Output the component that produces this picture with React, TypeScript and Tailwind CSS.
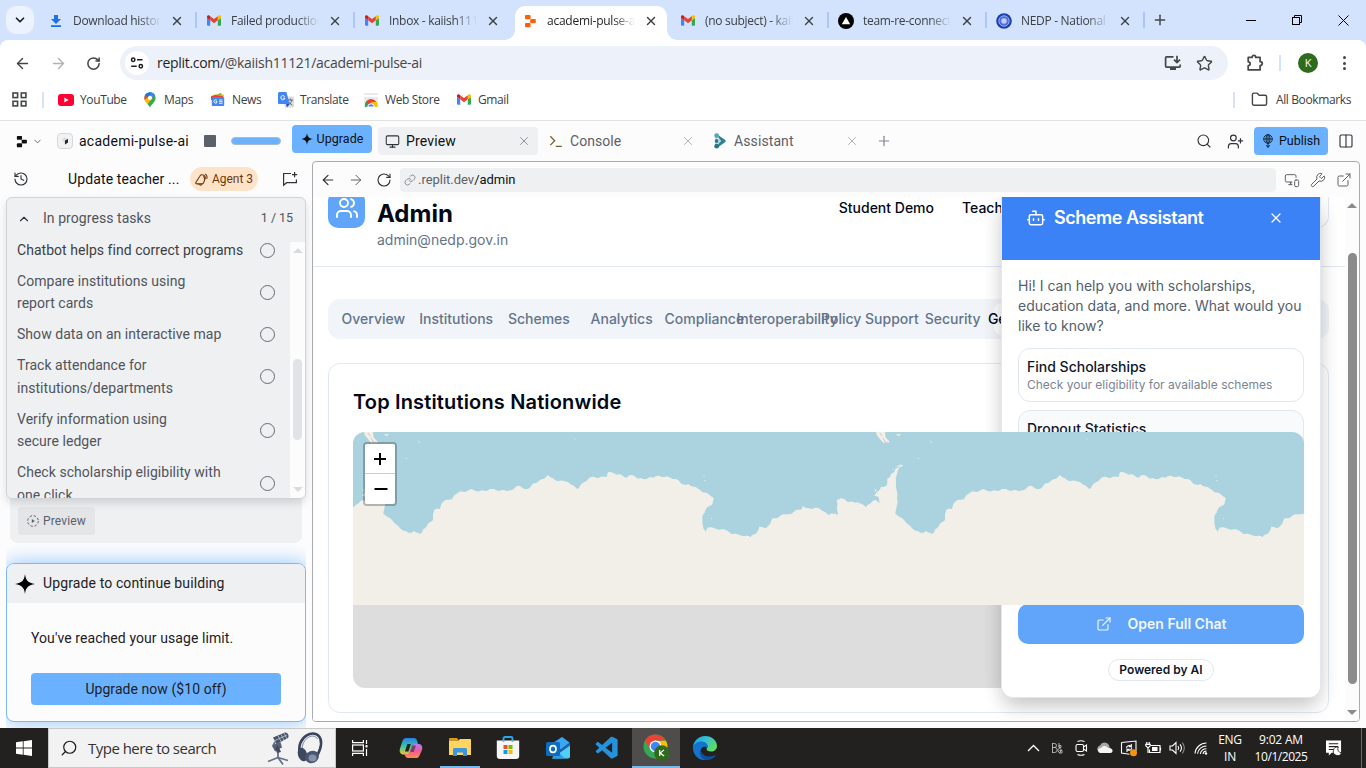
import type { ReactNode } from "react";
import {
  ArrowLeft,
  ArrowRight,
  Bot,
  ChevronDown,
  ChevronUp,
  Columns2,
  ExternalLink,
  Folder,
  History,
  Link,
  Monitor,
  MonitorSmartphone,
  Plus,
  RotateCw,
  Search,
  Star,
  UserPlus,
  Users,
  Wrench,
  X,
} from "lucide-react";
import { VscVscode } from "react-icons/vsc";

/* ---------- small drawings ---------- */

function GmailIcon() {
  return (
    <svg viewBox="0 0 24 18" className="h-[11px] w-[14px] shrink-0">
      <path fill="#4285f4" d="M1.6 18H5.5V8.6L0 4.5v11.9C0 17.3.7 18 1.6 18z" />
      <path fill="#34a853" d="M18.5 18h3.9c.9 0 1.6-.7 1.6-1.6V4.5l-5.5 4.1z" />
      <path fill="#fbbc04" d="M18.5 1.6v7L24 4.5V2.3C24 .3 21.7-.9 20 .3z" />
      <path fill="#ea4335" d="M5.5 8.6v-7L12 6.5l6.5-4.9v7L12 13.5z" />
      <path fill="#c5221f" d="M0 2.3v2.2l5.5 4.1v-7L4 .3C2.3-.9 0 .3 0 2.3z" />
    </svg>
  );
}

function ReplitIcon({ className }: { className: string }) {
  return (
    <svg viewBox="0 0 12 14" className={className} fill="currentColor">
      <rect x="1" y="1" width="5.6" height="4.2" rx="0.9" />
      <rect x="6.2" y="5" width="5.6" height="4.2" rx="0.9" />
      <rect x="1" y="9" width="5.6" height="4.2" rx="0.9" />
    </svg>
  );
}

function DownloadIcon() {
  return (
    <svg viewBox="0 0 12 14" className="h-3.5 w-3" fill="#1a73e8">
      <path d="M4 1h4v4h3L6 10 1 5h3z" />
      <rect x="1" y="11.2" width="10" height="1.8" />
    </svg>
  );
}

function VercelIcon() {
  return (
    <svg viewBox="0 0 16 16" className="size-4">
      <circle cx="8" cy="8" r="8" />
      <path d="M8 4l4.200 7.200H3.800z" fill="#fff" />
    </svg>
  );
}

function EmblemIcon() {
  return (
    <svg viewBox="0 0 16 16" className="size-4">
      <circle cx="8" cy="8" r="7.8" fill="#1e40af" />
      <circle cx="8" cy="8" r="5.2" fill="#4a6ad6" stroke="#9db1ee" strokeWidth="1" />
      <circle cx="8" cy="8" r="2.8" fill="#c3cff6" stroke="#8fa5ec" strokeWidth="0.8" />
    </svg>
  );
}

function TuneIcon() {
  return (
    <svg viewBox="0 0 14 14" className="size-3.5" fill="none" stroke="#1f1f1f" strokeWidth="1.5">
      <circle cx="3.2" cy="3.8" r="1.7" />
      <path d="M7 3.8h5.5M1.2 10.2h5.5" />
      <circle cx="10.8" cy="10.2" r="1.7" />
    </svg>
  );
}

function InstallIcon() {
  return (
    <svg viewBox="0 0 18 16" className="h-4 w-[18px]" fill="none" stroke="#444746" strokeWidth="1.7">
      <path d="M9.5 1.9H2.6c-.6 0-1 .4-1 1v8.2c0 .6.4 1 1 1h12.6c.6 0 1-.4 1-1V9.6" />
      <path d="M13 .8v6.4M10 4.6l3 3 3-3" />
      <path d="M6 13.9h6" strokeWidth="2.2" />
    </svg>
  );
}

function PuzzleIcon() {
  return (
    <svg viewBox="0 0 18 18" className="size-[18px]" fill="none" stroke="#444746" strokeWidth="1.7" strokeLinejoin="round">
      <path d="M2.2 3.4h3.9c0-2.6 3.6-2.6 3.6 0h4.4v4.3c2.9 0 2.9 3.8 0 3.8v4.4H2.2v-4.2c2.6 0 2.6-3.9 0-3.9z" />
    </svg>
  );
}

function AppsIcon() {
  return (
    <svg viewBox="0 0 15 15" className="size-[15px]" fill="none" stroke="#444746" strokeWidth="1.6">
      <rect x="1" y="1" width="4.6" height="4.6" />
      <rect x="9.3" y="1" width="4.6" height="4.6" />
      <rect x="1" y="9.3" width="4.6" height="4.6" />
      <rect x="9.3" y="9.3" width="4.6" height="4.6" />
    </svg>
  );
}

function YouTubeIcon() {
  return (
    <svg viewBox="0 0 16 12" className="h-3 w-4">
      <rect width="16" height="12" rx="3" fill="#f03" />
      <path d="M6.3 3.5v5L10.6 6z" fill="#fff" />
    </svg>
  );
}

function MapsIcon() {
  return (
    <svg viewBox="0 0 12 16" className="h-4 w-3">
      <defs>
        <clipPath id="pin">
          <path d="M6 15.800C5.200 12.500.400 10.500.400 5.800a5.600 5.600 0 0 1 11.200 0C11.600 10.500 6.800 12.500 6 15.800z" />
        </clipPath>
      </defs>
      <g clipPath="url(#pin)">
        <rect width="12" height="16" fill="#34a853" />
        <path d="M-1 10L6 2l3 3.500L3 13z" fill="#fbbc04" />
        <path d="M-1 9V2l3.200-.5L5 4.200z" fill="#ea4335" />
        <path d="M1 2l6-3 2 1-5 6z" fill="#1a73e8" />
        <path d="M8.500-1L4.500 5l3 2 5-5z" fill="#4285f4" />
      </g>
      <circle cx="6" cy="5.800" r="2.100" fill="#fff" />
    </svg>
  );
}

function NewsIcon() {
  return (
    <svg viewBox="0 0 14 13" className="h-[13px] w-3.5">
      <path d="M1 3.500L10 0l1.500 5z" fill="#34a853" />
      <path d="M3 1.500h10l-1 6H3z" fill="#fbbc04" />
      <path d="M0 3l4-1 8 1v4H0z" fill="#ea4335" />
      <rect x="0.8" y="4" width="12.4" height="9" rx="1" fill="#4285f4" />
      <path d="M6 7.300A1.700 1.700 0 1 0 6 9.500V8.700H4.600M8 7h3.500M8 8.700h3.500M8 10.300h3.500" stroke="#fff" strokeWidth="0.9" fill="none" />
    </svg>
  );
}

function TranslateIcon() {
  return (
    <svg viewBox="0 0 16 16" className="size-4">
      <rect x="6.5" y="4.5" width="9.5" height="11" rx="1" fill="#dadce0" />
      <path d="M9.500 8h5.500M12.200 6.500V8M10 13c2.500-1.200 3.500-3 3.700-5M10.600 9.500c.6 1.500 2 2.700 3.700 3.500" stroke="#5f6368" strokeWidth="0.9" fill="none" />
      <path d="M1 0h7.500l3 12H1.300A1.200 1.200 0 0 1 0 10.800V1z" fill="#4285f4" />
      <path d="M8 12h3.500L9 15.500z" fill="#1a55c4" />
      <path d="M6.800 4.700a2.100 2.100 0 1 0 .2 1.500H5" stroke="#fff" strokeWidth="1" fill="none" />
    </svg>
  );
}

function WebStoreIcon() {
  return (
    <svg viewBox="0 0 14 14" className="size-3.5">
      <rect width="14" height="14" rx="1" fill="#e8eaed" />
      <path d="M0 3h14" stroke="#fff" strokeWidth="2" />
      <path d="M1 12a6 6 0 0 1 12 0" fill="#ea4335" />
      <path d="M1 14a6 6 0 0 1 1.200-5.200L6 14z" fill="#34a853" />
      <path d="M13 14a6 6 0 0 0-.2-5H7.500l-.5 5z" fill="#fbbc04" />
      <path d="M3.700 14a3.300 3.300 0 0 1 6.600 0z" fill="#4285f4" stroke="#fff" />
    </svg>
  );
}

function SparkIcon({ className }: { className: string }) {
  return (
    <svg viewBox="0 0 20 20" className={className} fill="currentColor">
      <path d="M10 0c.7 6 2.800 9 10 10-7.200 1-9.300 4-10 10-.7-6-2.800-9-10-10C7.200 9 9.300 6 10 0z" />
    </svg>
  );
}

function AssistantIcon() {
  return (
    <svg viewBox="0 0 12 16" className="h-4 w-3">
      <path d="M1 4.500l5 1.500v4.500L1 12z" fill="#bfe3e8" />
      <path d="M2.500 1L11 6.700c.9.700.9 1.900 0 2.600L2.800 15l2-4.500L7 8 4.800 5z" fill="#2f8291" />
      <circle cx="2.700" cy="2.700" r="2.400" fill="#53a9b8" />
      <circle cx="2.600" cy="8" r="1.900" fill="#2f7d8c" />
      <circle cx="2.700" cy="13.200" r="2.400" fill="#2b7787" />
    </svg>
  );
}

function AgentIcon() {
  return (
    <svg viewBox="0 0 13 13" className="size-[13px]" fill="none" stroke="#6b3a0c" strokeWidth="1.1" strokeLinejoin="round" strokeLinecap="round">
      <path d="M1 9.300L4.800 3.200c.8-1.400 2.600-1.900 4-1 1.300.8 1.800 2.400 1.200 3.800L8.600 9.800c-.3.700-.9 1.100-1.600 1.100H1.900c-.9 0-1.400-.8-.9-1.600z" />
      <path d="M3.800 11c.3 1.400 2.400 1.400 3 .2M8.500 3.800c.9.500 1.200 1.400.9 2.300M10.500 1.300c1.400 1 1.800 2.600 1.300 4.200" />
    </svg>
  );
}

function GlobePinIcon() {
  return (
    <svg viewBox="0 0 12 14" className="h-3.5 w-3" fill="none" stroke="#111d2c" strokeWidth="0.9">
      <circle cx="6" cy="5" r="4.300" />
      <ellipse cx="6" cy="5" rx="2" ry="4.300" />
      <path d="M1.700 5h8.600M6 .700v12.600M4.300 11l1.700 2.500L7.700 11" />
    </svg>
  );
}

function ChatPlusIcon() {
  return (
    <svg viewBox="0 0 16 16" className="size-4" fill="none" stroke="#30343a" strokeWidth="1.2">
      <path d="M9 2.500H1.600v11.800l3-2.600h9.800V8.500" />
      <path d="M12.600 1v5.200M10 3.600h5.200" />
    </svg>
  );
}

/* ---------- browser chrome ---------- */

interface BrowserTab {
  title: string;
  icon: ReactNode;
  active?: boolean;
  divider?: boolean;
}

const browserTabs: BrowserTab[] = [
  { title: "Download history", icon: <DownloadIcon />, divider: true },
  { title: "Failed production", icon: <GmailIcon />, divider: true },
  { title: "Inbox - kaiish11121", icon: <GmailIcon /> },
  { title: "academi-pulse-ai", icon: <ReplitIcon className="h-3.5 w-3 text-[#fa5f0a]" />, active: true },
  { title: "(no subject) - kaiish", icon: <GmailIcon />, divider: true },
  { title: "team-re-connect", icon: <VercelIcon />, divider: true },
  { title: "NEDP - National E", icon: <EmblemIcon />, divider: true },
];

function TabStrip() {
  return (
    <div className="flex h-10 bg-[#d3e3fd]">
      <div className="flex w-[41px] items-center pl-1.5">
        <div className="flex size-7 items-center justify-center rounded-[10px] bg-[#ecf2fe]">
          <ChevronDown className="size-3.5 text-[#1f1f1f]" strokeWidth={3} />
        </div>
      </div>
      {browserTabs.map((tab) => (
        <div key={tab.title} className="relative flex h-10 w-[158px] shrink-0 pt-1.5">
          <div
            className={
              tab.active
                ? "flex w-[152px] items-center rounded-t-[10px] bg-white pb-[5px]"
                : "flex w-[152px] items-center pb-[5px]"
            }
          >
            <div className="ml-[7px] flex w-4 shrink-0 justify-center">{tab.icon}</div>
            <div
              className={
                tab.active
                  ? "ml-[9px] w-[88px] overflow-hidden whitespace-nowrap text-[12px] tracking-[-0.25px] text-[#1f1f1f] [mask-image:linear-gradient(90deg,#000_75%,transparent)]"
                  : "ml-[9px] w-[88px] overflow-hidden whitespace-nowrap text-[12px] tracking-[-0.3px] text-[#3c4043] [mask-image:linear-gradient(90deg,#000_75%,transparent)]"
              }
            >
              {tab.title}
            </div>
            <X className="ml-[9px] size-3.5 shrink-0 text-[#3c4043]" strokeWidth={2.4} />
          </div>
          {tab.divider && <div className="mt-[6px] ml-[2px] h-4 w-[2px] bg-[#a8c7fa]" />}
          {tab.active && (
            <>
              <div className="absolute bottom-0 -left-2.5 size-2.5 bg-[radial-gradient(circle_at_0_0,#d3e3fd_9.5px,#fff_10px)]" />
              <div className="absolute right-[-4px] bottom-0 size-2.5 bg-[radial-gradient(circle_at_100%_0,#d3e3fd_9.5px,#fff_10px)]" />
            </>
          )}
        </div>
      ))}
      <div className="flex w-[81px] items-center pl-[5px]">
        <Plus className="size-4 text-[#444746]" strokeWidth={2.2} />
      </div>
      <div className="flex flex-1 items-center justify-between pr-[17px] pl-[18px]">
        <div className="h-px w-2.5 bg-black" />
        <svg viewBox="0 0 10 10" className="size-2.5" fill="none" stroke="#000">
          <rect x="0.5" y="2.5" width="7" height="7" />
          <path d="M2.5 2.5v-2h7v7h-2" />
        </svg>
        <svg viewBox="0 0 11 11" className="size-[11px]" fill="none" stroke="#000">
          <path d="M.5.5l10 10M10.5.5l-10 10" />
        </svg>
      </div>
    </div>
  );
}

function AddressBar() {
  return (
    <div className="bg-[#d3e3fd]">
      <div className="flex h-[46px] items-center rounded-t-lg bg-white">
        <ArrowLeft className="ml-3.5 size-[17px] text-[#444746]" strokeWidth={2} />
        <ArrowRight className="ml-[19px] size-[17px] text-[#b0b2b5]" strokeWidth={2} />
        <RotateCw className="ml-[19px] size-[15px] text-[#444746]" strokeWidth={2.4} />
        <div className="ml-[19px] flex h-[34px] w-[1108px] items-center rounded-full bg-[#edf1fa] pr-[15px] pl-[5px]">
          <div className="flex size-6 items-center justify-center rounded-full bg-white">
            <TuneIcon />
          </div>
          <div className="ml-2 flex-1 pb-0.5 text-[14px] tracking-[-0.3px] text-[#474747]">
            <span className="text-[#1f1f1f]">replit.com</span>/@kaiish11121/academi-pulse-ai
          </div>
          <InstallIcon />
          <Star className="ml-3.5 size-[17px] text-[#444746]" />
        </div>
        <div className="ml-[18px]">
          <PuzzleIcon />
        </div>
        <div className="ml-[15px] h-4 w-[2px] bg-[#d3e3fd]" />
        <div className="ml-[17px] flex size-5 items-center justify-center rounded-full bg-[#2e6b1d] text-[11px] text-white">K</div>
        <div className="ml-[25px] flex flex-col gap-[2.5px]">
          <div className="size-[3px] rounded-full bg-[#444746]" />
          <div className="size-[3px] rounded-full bg-[#444746]" />
          <div className="size-[3px] rounded-full bg-[#444746]" />
        </div>
      </div>
    </div>
  );
}

const bookmarks = [
  { label: "YouTube", icon: <YouTubeIcon />, box: "w-[84px]" },
  { label: "Maps", icon: <MapsIcon />, box: "w-[68px]" },
  { label: "News", icon: <NewsIcon />, box: "w-[68px]" },
  { label: "Translate", icon: <TranslateIcon />, box: "w-[85px]" },
  { label: "Web Store", icon: <WebStoreIcon />, box: "w-[93px]" },
  { label: "Gmail", icon: <GmailIcon />, box: "w-[86px]" },
];

function BookmarkBar() {
  return (
    <div className="flex h-[35px] items-center border-b border-[#e0e2e5] bg-white pb-[7px] text-[12px] tracking-[-0.38px] text-[#3c4043]">
      <div className="ml-3 w-[30px]">
        <AppsIcon />
      </div>
      <div className="mr-[14px] h-4 w-[2px] bg-[#d3e3fd]" />
      {bookmarks.map((b) => (
        <div key={b.label} className={`${b.box} flex items-center`}>
          <div className="flex w-4 justify-center">{b.icon}</div>
          <span className="ml-1.5">{b.label}</span>
        </div>
      ))}
      <div className="ml-auto h-4 w-[2px] bg-[#d3e3fd]" />
      <Folder className="ml-4 size-[17px] text-[#444746]" strokeWidth={2} />
      <span className="mr-[15px] ml-2">All Bookmarks</span>
    </div>
  );
}

/* ---------- workspace header ---------- */

function WorkspaceHeader() {
  return (
    <div className="flex h-10 shrink-0 items-center text-[14px] text-[#0e1013]">
      <ReplitIcon className="ml-[15px] h-[13px] w-[13px]" />
      <ChevronDown className="ml-1 size-[11px] text-[#5c6069]" />
      <div className="ml-[14px] flex size-4 items-center justify-center rounded border border-[#d5d7da] bg-[#f1f2f3]">
        <svg viewBox="0 0 8 8" className="size-2">
          <path d="M1 2l3-1.500L7 2v3.500L4 7.500z" fill="#d9dbde" />
          <path d="M4 3.500L7 2v3.500L4 7.500z" fill="#24272b" />
        </svg>
      </div>
      <span className="ml-1.5 w-[111px] whitespace-nowrap tracking-[0.25px]">academi-pulse-ai</span>
      <div className="ml-3.5 size-3 rounded-[1px] bg-[#5c6069]" />
      <div className="ml-[15px] h-2 w-[50px] rounded-full border border-[#a9bdd2] bg-[#6ab2ff]" />
      <div className="mb-1 ml-[11px] flex h-7 w-20 items-center justify-center gap-1 rounded bg-[#6ab2ff] text-[12.5px] tracking-[0.05px]">
        <SparkIcon className="size-3" />
        Upgrade
      </div>
      <div className="ml-1.5 flex h-7 w-40 items-center rounded bg-[#eff0f2] px-[7px]">
        <Monitor className="size-[15px] text-[#30343a]" strokeWidth={1.7} />
        <span className="ml-1.5 flex-1 tracking-[0.15px]">Preview</span>
        <X className="size-3.5 text-[#808690]" strokeWidth={1.5} />
      </div>
      <div className="ml-1 flex h-7 w-40 items-center px-[7px] text-[#5c6069]">
        <svg viewBox="0 0 14 14" className="size-3.5" fill="none" stroke="#6d6330" strokeWidth="1.3">
          <path d="M1.300 2.300l4.400 4.400-4.400 4.400M6.800 12.400h6" />
        </svg>
        <span className="ml-[7px] flex-1 tracking-[0.05px]">Console</span>
        <X className="size-3.5 text-[#a3a7ae]" strokeWidth={1.5} />
      </div>
      <div className="ml-1 flex h-7 w-40 items-center px-[7px] text-[#5c6069]">
        <div className="w-[21px] pl-px">
          <AssistantIcon />
        </div>
        <span className="flex-1 tracking-[0.1px]">Assistant</span>
        <X className="size-3.5 text-[#a3a7ae]" strokeWidth={1.5} />
      </div>
      <Plus className="ml-2.5 size-4 text-[#808690]" strokeWidth={1.8} />
      <Search className="ml-auto size-4 text-[#30343a]" strokeWidth={1.7} />
      <UserPlus className="ml-[15px] size-[17px] text-[#30343a]" strokeWidth={1.7} />
      <div className="ml-2.5 flex h-7 w-[74px] items-center justify-center gap-[5px] rounded bg-[#6ab2ff] text-[12.5px]">
        <GlobePinIcon />
        Publish
      </div>
      <Columns2 className="mr-3 ml-2.5 size-4 text-[#30343a]" strokeWidth={1.7} />
    </div>
  );
}

/* ---------- agent sidebar ---------- */

const tasks: string[][] = [
  ["Chatbot helps find correct programs"],
  ["Compare institutions using", "report cards"],
  ["Show data on an interactive map"],
  ["Track attendance for", "institutions/departments"],
  ["Verify information using", "secure ledger"],
  ["Check scholarship eligibility with", "one click"],
];

function TaskPanel() {
  return (
    <div className="relative z-10 flex h-[302px] shrink-0 flex-col overflow-hidden rounded-md border border-[#d0d3d7] bg-[#eff0f2] text-[14px] text-[#50545b] shadow-[0_4px_8px_rgba(0,0,0,0.13)]">
      <div className="flex h-[41px] shrink-0 items-center pr-3 pl-2.5">
        <ChevronUp className="size-3.5 text-[#30343a]" />
        <span className="ml-3 flex-1 tracking-[0.06px]">In progress tasks</span>
        <span className="text-[12.5px] tracking-[-0.05px]">1 / 15</span>
      </div>
      <div className="flex min-h-0 flex-1">
        <div className="flex flex-1 flex-col gap-[8.6px] pl-2.5">
          {tasks.map((lines) => (
            <div key={lines[0]} className="flex items-center leading-[22.4px] tracking-[0.04px] first:text-[#3b3f45]">
              <div className="flex-1 whitespace-nowrap">
                {lines.map((line) => (
                  <div key={line}>{line}</div>
                ))}
              </div>
              <div className="mr-[15px] size-[15px] rounded-full border-[1.500px] border-[#666a71]" />
            </div>
          ))}
        </div>
        <div className="mt-[3px] flex w-[15px] flex-col items-center bg-[#fcfcfc] py-1.5">
          <div className="border-x-[5px] border-b-[5px] border-x-transparent border-b-[#d9dbde]" />
          <div className="mt-[106px] h-[81px] w-[9px] rounded-full bg-[#e2e3e6]" />
          <div className="mt-auto border-x-[5px] border-t-[5px] border-x-transparent border-t-[#d9dbde]" />
        </div>
      </div>
    </div>
  );
}

function Sidebar() {
  return (
    <div className="flex w-[312px] shrink-0 flex-col">
      <div className="flex h-9 shrink-0 items-center text-[#0e1013]">
        <History className="ml-[13px] size-4 text-[#30343a]" strokeWidth={1.7} />
        <span className="ml-[39px] w-[122px] text-[14px] tracking-[0.12px] whitespace-nowrap">Update teacher ...</span>
        <div className="flex h-6 w-[68px] items-center justify-center gap-1 rounded-full bg-[#ffe3c9] text-[12px] text-[#6b3a0c]">
          <AgentIcon />
          Agent 3
        </div>
        <div className="ml-6">
          <ChatPlusIcon />
        </div>
      </div>
      <div className="flex flex-1 flex-col pr-1.5 pl-1.5">
        <TaskPanel />
        <div className="mr-[4px] ml-1 h-[44px] shrink-0 rounded-b-lg bg-[#eff0f2] px-2 pt-2">
          <div className="flex h-7 w-[77px] items-center justify-center gap-1 rounded bg-[#e4e5e7] text-[12px] tracking-[0.15px] text-[#5c6069]">
            <svg viewBox="0 0 12 12" className="size-3" fill="none" stroke="#5c6069">
              <circle cx="6" cy="6" r="5.3" strokeDasharray="2.4 1.76" />
              <path d="M4.800 4v4l3-2z" fill="#5c6069" stroke="none" />
            </svg>
            Preview
          </div>
        </div>
        <div className="flex-1 overflow-hidden pt-5">
          <div className="h-[159px] overflow-hidden rounded-lg border border-[#7cb8f8] bg-[#fcfcfc] text-[14px] text-[#1d2024] shadow-[0_0_20px_rgba(106,178,255,0.75)]">
            <div className="flex h-[39px] items-center bg-[#eff0f2] pl-2">
              <SparkIcon className="size-5 text-black" />
              <span className="ml-2 tracking-[0.12px]">Upgrade to continue building</span>
            </div>
            <div className="px-6 pt-6">
              <div className="leading-[22px] tracking-[0.08px]">You've reached your usage limit.</div>
              <div className="mt-6 flex h-8 items-center justify-center rounded bg-[#6ab2ff] tracking-[0.06px]">
                Upgrade now ($10 off)
              </div>
            </div>
          </div>
        </div>
      </div>
    </div>
  );
}

/* ---------- map ---------- */

const coast: [number, number][] = [
  [383.3, 513.3], [392, 520], [400, 528.3], [408.3, 532.7], [414, 531], [420, 534], [425, 528], [433, 520],
  [434, 510], [440, 509], [443, 502], [452.7, 498], [458, 493], [470, 489.5], [480, 491], [492, 489], [506.7, 491.3],
  [519.3, 485.7], [526.7, 489.3], [533.3, 483.3], [541.7, 479.3], [547.7, 475], [555, 480], [568.3, 482.3],
  [577.3, 489], [585, 481.7], [593.3, 476.7], [597.3, 478.3], [607, 476.7], [608.3, 472.3], [618.3, 474.3],
  [626.7, 477.7], [631.7, 475], [638.3, 478.7], [653.3, 477.7], [657.3, 475.7], [668.3, 476.7], [678.3, 480],
  [681.7, 484], [688.3, 484], [700, 490], [713.3, 497.3], [712.7, 503.3], [705, 510.7], [702.3, 518.3],
  [703.3, 528.3], [706, 531.7], [707.7, 527.7], [723.3, 529.3], [733.3, 534], [746.7, 535.7], [750.7, 537.3],
  [758.3, 530], [759.3, 526.7], [766.7, 527.7], [772.7, 518.3], [786.7, 514.3], [801.7, 509.3], [802.7, 506],
  [808.3, 508], [820, 508.7], [828.3, 515], [831.7, 513.3], [838, 515], [836.7, 500], [843.7, 498.7],
  [847.8, 502.3], [855.6, 502.7], [861.5, 504], [866, 507.3], [871, 502.7], [875.5, 500], [879.6, 503.3],
  [878.5, 496.7], [874, 495.5], [877, 491.7], [881, 486.7], [886.4, 485.7], [887.4, 478.3], [893.2, 472.7], [895.6, 468.3],
  [903.5, 465], [898.4, 469.3], [896.7, 475], [896, 483.3], [897.7, 501.7],
];

const WORLD = 512;

/* Breaks long stretches of shore into short, slightly uneven steps. */
function roughen(points: [number, number][]): [number, number][] {
  const out: [number, number][] = [];
  points.forEach(([x, y], i) => {
    out.push([x, y]);
    const next = points[i + 1];
    if (!next) return;
    const steps = Math.floor(Math.hypot(next[0] - x, next[1] - y) / 2);
    for (let s = 1; s < steps; s++) {
      const t = s / steps;
      const wobble = Math.sin(i * 12.9 + s * 7.3) * 0.9;
      out.push([x + (next[0] - x) * t + wobble * 0.5, y + (next[1] - y) * t + wobble]);
    }
  });
  return out;
}

const shore = roughen(coast);
const shoreline = [-WORLD, 0, WORLD]
  .flatMap((shift) => shore.map(([x, y]) => `${(x + shift).toFixed(1)},${y.toFixed(1)}`))
  .join(" L");

function MapTiles() {
  return (
    <svg viewBox="353 432 951 173" className="relative z-20 block h-[173px] w-full rounded-t-xl">
      <rect x="353" y="432" width="951" height="173" fill="#aad3df" />
      <path d={`M-200,640 L${shoreline} L1500,640 Z`} fill="#f2efe9" />
      {[0, WORLD].map((shift) => (
        <g key={shift} transform={`translate(${shift} 0)`} fill="#f2efe9">
          <path d="M364 432h9l.5 5 1.500 2 3 3-3 1-4-.5-3-3.500-3-3.500z" />
          <path d="M368 433l2 3M371 438l2 3M372 441l4 2" stroke="#d9aebc" strokeWidth="0.7" />
          <path d="M384 435l2-1 3 .5-2 1.500zM417 440l3 2v1zM574.500 438.500h1.200v.7h-1.200zM406 458h1v1h-1zM703.500 475h1v1h-1zM704.500 480h1v1.200h-1zM711 518h1v.8h-1zM383 467l5-2.500 2-.5-4 2.500zM380 470l2-1v1zM362.500 489l2 1-1 2zM364 495l2 .5-2 1z" />
        </g>
      ))}
    </svg>
  );
}

function InstitutionMap() {
  return (
    <div className="relative h-64 rounded-xl bg-[#ddd]">
      <MapTiles />
      <div className="absolute top-2.5 left-2.5 z-30 w-[34px] rounded border-2 border-black/25 bg-clip-padding">
        <div className="flex h-[30px] items-center justify-center rounded-t-[2px] border-b border-[#ccc] bg-white">
          <svg viewBox="0 0 14 14" className="size-3.5" stroke="#000" strokeWidth="2">
            <path d="M1 7h12M7 1v12" />
          </svg>
        </div>
        <div className="flex h-[30px] items-center justify-center rounded-b-[2px] bg-white pl-px">
          <svg viewBox="0 0 14 14" className="size-3.5" stroke="#000" strokeWidth="2">
            <path d="M.5 7h13" />
          </svg>
        </div>
      </div>
    </div>
  );
}

/* ---------- previewed site ---------- */

const sections = [
  "Overview",
  "Institutions",
  "Schemes",
  "Analytics",
  "Compliance",
  "Interoperability",
  "Policy Support",
  "Security",
  "Geo Analytics",
];

function SchemeAssistant() {
  return (
    <div className="absolute top-0 right-6 z-10 flex h-[501px] w-80 flex-col rounded-b-xl border border-t-0 border-[#e2e8f0] bg-white shadow-[0_12px_20px_-3px_rgba(0,0,0,0.18),0_0_22px_rgba(0,0,0,0.09)]">
      <div className="flex h-[63px] items-start bg-[#3b82f6] pt-[11px] text-white">
        <Bot className="ml-6 size-5" strokeWidth={1.8} />
        <span className="ml-2 text-[18px] leading-[20px] font-semibold tracking-[-0.45px]">Scheme Assistant</span>
        <X className="mt-[2px] ml-auto mr-9 size-4" strokeWidth={1.8} />
      </div>
      <div className="flex flex-1 flex-col px-4 pt-4">
        <p className="text-[14px] leading-5 text-[#545e6c]">
          Hi! I can help you with scholarships,
          <br />
          <span className="whitespace-nowrap">education data, and more. What would you</span>
          <br />
          like to know?
        </p>
        <div className="mt-3 h-[54px] rounded-xl border border-[#e2e8f0] px-2 pt-2">
          <div className="text-[14px] leading-5 font-medium text-[#0f172a]">Find Scholarships</div>
          <div className="text-[12px] leading-4 text-[#7b8494]">Check your eligibility for available schemes</div>
        </div>
        <div className="mt-2 h-[54px] rounded-xl border border-[#e2e8f0] bg-[#f8fafc] px-2 pt-2">
          <div className="text-[14px] leading-5 font-medium text-[#0f172a]">Dropout Statistics</div>
        </div>
        <div className="mt-auto flex h-10 items-center justify-center rounded-[10px] bg-[#60a5fa] pb-px text-[14px] font-semibold text-[#f1f6fe]">
          <ExternalLink className="mr-4 size-4" strokeWidth={1.8} />
          Open Full Chat
        </div>
        <div className="mx-auto mt-[15px] mb-4 flex h-[22px] w-[106px] items-center justify-center rounded-full border border-[#e2e8f0] text-[12px] font-semibold text-[#0f172a]">
          Powered by AI
        </div>
      </div>
    </div>
  );
}

function AdminPage() {
  return (
    <div className="relative h-full w-[1032px] shrink-0 overflow-hidden bg-white font-['Inter',sans-serif]">
      <header className="flex h-[70px] border-b border-[#e2e8f0] pr-4 pl-[15px]">
        <div className="-mt-1.5 flex size-[37px] items-center justify-center rounded-[10px] bg-[#60a5fa] pb-1 text-white">
          <Users className="size-6" strokeWidth={1.9} />
        </div>
        <div className="ml-3 pt-px">
          <h1 className="text-[24px] leading-8 font-bold text-[#020817]">Admin</h1>
          <p className="text-[14px] leading-5 text-[#64748b]">admin@nedp.gov.in</p>
        </div>
        <nav className="ml-auto flex items-start gap-7 text-[14px] font-medium text-[#020817]">
          <span className="pt-0.5 leading-[18px]">Student Demo</span>
          <span className="w-[100px] pt-0.5 leading-[18px] whitespace-nowrap">Teacher Demo</span>
          <div className="ml-[140px] h-[31px] w-[99px] rounded-b-xl border border-t-0 border-[#e2e8f0]" />
        </nav>
      </header>
      <div className="mt-8 mr-4 ml-[15px] grid h-10 grid-cols-12 rounded-xl bg-[#f1f5f9] p-1 text-[14px] font-medium text-[#64748b]">
        {sections.map((name) => (
          <div
            key={name}
            className={
              name === "Geo Analytics"
                ? "flex items-center justify-center rounded-lg bg-white pr-0.5 pb-0.5 whitespace-nowrap text-[#020817]"
                : "flex items-center justify-center pb-0.5 whitespace-nowrap"
            }
          >
            {name}
          </div>
        ))}
      </div>
      <section className="mt-6 mr-4 ml-[15px] h-[350px] rounded-xl border border-[#e2e8f0] px-6 pt-6">
        <h2 className="mb-4 text-[20px] leading-7 font-semibold tracking-[0.16px] text-[#020817]">Top Institutions Nationwide</h2>
        <InstitutionMap />
      </section>
      <SchemeAssistant />
    </div>
  );
}

function PreviewPane() {
  return (
    <div className="flex h-[561px] w-[1048px] flex-col overflow-hidden rounded border border-[#a8abb0] bg-[#fcfcfc]">
      <div className="flex h-[35px] shrink-0 items-center text-[#30343a]">
        <ArrowLeft className="ml-[7px] size-4" strokeWidth={1.8} />
        <ArrowRight className="ml-3 size-4 text-[#5c6069]" strokeWidth={1.5} />
        <RotateCw className="ml-3 size-4" strokeWidth={1.7} />
        <div className="ml-2 flex h-6 w-[876px] items-center rounded bg-[#eff0f2] pl-1 text-[13px] tracking-[-0.02px] text-[#5c6069]">
          <Link className="mr-0.5 size-3 text-[#808690]" strokeWidth={1.8} />
          <span>
            .replit.dev<span className="text-[#0e1013]">/admin</span>
          </span>
        </div>
        <MonitorSmartphone className="ml-2 size-4 text-[#5c6069]" strokeWidth={1.5} />
        <Wrench className="ml-2.5 size-4 text-[#5c6069]" strokeWidth={1.5} />
        <ExternalLink className="ml-2.5 size-4 text-[#5c6069]" strokeWidth={1.5} />
      </div>
      <div className="flex min-h-0 flex-1">
        <AdminPage />
        <div className="flex flex-1 flex-col items-center bg-[#fcfcfc] py-1.5">
          <div className="border-x-[5px] border-b-[5px] border-x-transparent border-b-[#8b8b8b]" />
          <div className="mt-[45px] h-[431px] w-[9px] rounded-full bg-[#8b8b8b]" />
          <div className="mt-auto border-x-[5px] border-t-[5px] border-x-transparent border-t-[#8b8b8b]" />
        </div>
      </div>
    </div>
  );
}

/* ---------- taskbar ---------- */

function SearchArt() {
  return (
    <svg viewBox="0 0 60 36" className="h-9 w-[60px]" fill="none">
      <path d="M9 12l-2 4 3 5M12 22v6M12 27.500L2 31.500M12 27.500l10 3M12 27.500l5 7" stroke="#667086" strokeWidth="1.8" />
      <path d="M6.500 15l8-3 1.500 5.500-7 3.500z" fill="#56617a" />
      <path d="M12 15l3 7-4 1-2-5z" fill="#434c60" />
      <path d="M7 7.500L19 2.500c2.500-.5 4.500 3 3 5.500L10.500 14z" fill="#4a5365" />
      <path d="M12 5.500l3 6M15 4.300l3 6M18 3l3 6M9 10.500l12-5.500" stroke="#c3cad7" strokeWidth="0.8" />
      <path d="M34 25C29 6 50-3 54.500 9c2 6-1.500 14-4.500 18" stroke="#39435a" strokeWidth="2.6" />
      <path d="M36.500 24C33 10 47 1 51.500 9" stroke="#7e8aa3" strokeWidth="1" />
      <ellipse cx="36.500" cy="24.500" rx="4.500" ry="7" fill="#3e485f" transform="rotate(-18 36.500 24.500)" />
      <ellipse cx="46" cy="27" rx="7" ry="6" fill="#4a5670" transform="rotate(-25 46 27)" />
      <ellipse cx="46.500" cy="28" rx="4" ry="3.500" fill="#8491ab" />
    </svg>
  );
}

function CopilotIcon() {
  return (
    <svg viewBox="0 0 24 22" className="h-[22px] w-6">
      <defs>
        <linearGradient id="cpLeft" x1="0" y1="0" x2="0" y2="1">
          <stop offset="0" stopColor="#2a7fe8" />
          <stop offset="0.5" stopColor="#3ac6a5" />
          <stop offset="1" stopColor="#f2c22f" />
        </linearGradient>
        <linearGradient id="cpRight" x1="0" y1="0" x2="0" y2="1">
          <stop offset="0" stopColor="#b57bf0" />
          <stop offset="0.5" stopColor="#ee5c9c" />
          <stop offset="1" stopColor="#ff8f45" />
        </linearGradient>
      </defs>
      <path d="M7 1h8c1.500 0 2.500 1 3 2.500L19 7h-3c-2 0-3 1-3.600 3l-1.700 5.500c-.6 1.500-1.500 2-3 2H4.500C1.500 17.500 0 15 1 11.500L3.500 4C4.200 2 5.300 1 7 1z" fill="url(#cpLeft)" />
      <path d="M17 21H9c-1.500 0-2.500-1-3-2.500L5.500 17h2.200c1.500 0 2.400-.5 3-2l2-6c.6-1.600 1.600-2 3.300-2h3.500c3 0 4.500 2.500 3.500 6l-2.500 5.500C19.800 20.500 18.700 21 17 21z" fill="url(#cpRight)" />
      <path d="M8.300 7h3.500L9.500 14.500H6z" fill="#20211f" />
      <path d="M13.500 8.500H17l-2.300 6.500h-3.500z" fill="#20211f" opacity="0.55" />
    </svg>
  );
}

function ExplorerIcon() {
  return (
    <svg viewBox="0 0 22 18" className="h-[18px] w-[22px]">
      <path d="M0 1.200C0 .5.5 0 1.200 0H8l2 2.500H0z" fill="#dd9b0c" />
      <path d="M0 2.500h9.500L11 1h10c.6 0 1 .4 1 1v15H0z" fill="#ffd45f" />
      <path d="M4 18v-6.500c0-.8.7-1.500 1.500-1.500h11c.8 0 1.500.7 1.500 1.500V18h-4v-3.500H8V18z" fill="#3b97dd" />
    </svg>
  );
}

function StoreIcon() {
  return (
    <svg viewBox="0 0 24 24" className="size-6">
      <path d="M7.500 6V2.500c0-.8.7-1.500 1.500-1.500h6c.8 0 1.500.7 1.500 1.500V6" stroke="#27a9e6" strokeWidth="1.9" fill="none" />
      <path d="M.8 4.500h22.400V20a3 3 0 0 1-3 3H3.800a3 3 0 0 1-3-3z" fill="#f6f6f6" />
      <path d="M7.500 4.500v1.200M16.500 4.500v1.200" stroke="#27a9e6" strokeWidth="1.9" />
      <path d="M7.500 9h4v4h-4z" fill="#f25022" />
      <path d="M12.500 9h4v4h-4z" fill="#7fba00" />
      <path d="M7.500 14h4v4h-4z" fill="#00a4ef" />
      <path d="M12.500 14h4v4h-4z" fill="#ffb900" />
    </svg>
  );
}

function OutlookIcon() {
  return (
    <svg viewBox="0 0 24 22" className="h-[22px] w-6">
      <path d="M6 6l10-6 8 6v13a2 2 0 0 1-2 2H7z" fill="#1a5fb4" />
      <path d="M9 5l7-5 7.500 5.500L15 12H9z" fill="#3ba7ee" />
      <path d="M6 21.500L24 8.500V19.500a2 2 0 0 1-2 2z" fill="#4fd1f5" />
      <path d="M10 13l9 8.500H6z" fill="#2b9fe6" />
      <rect y="5" width="14" height="14" rx="1.5" fill="#0f6cbd" />
      <ellipse cx="7" cy="12" rx="3" ry="3.4" fill="none" stroke="#fff" strokeWidth="1.7" />
    </svg>
  );
}

function ChromeIcon() {
  return (
    <svg viewBox="0 0 27 27" className="size-[27px]">
      <circle cx="12.5" cy="12.5" r="12" fill="#34a853" />
      <path d="M2.100 6.500a12 12 0 0 1 20.800 0H12.500z" fill="#ea4335" />
      <path d="M2.100 6.500A12 12 0 0 1 12.500.5v7L7 15.500z" fill="#ea4335" />
      <path d="M22.900 6.800A12 12 0 0 1 12.500 24.500l5.200-9L12.500 7z" fill="#fbbc04" />
      <circle cx="12.5" cy="12.5" r="6" fill="#fff" />
      <circle cx="12.5" cy="12.5" r="4.7" fill="#4285f4" />
      <circle cx="18.8" cy="19" r="7.7" fill="#2e6b1d" />
      <path d="M16.700 15.900v6.200M20.900 15.900l-3.700 3.200 3.900 3" stroke="#fff" strokeWidth="1.2" fill="none" />
    </svg>
  );
}

function EdgeIcon() {
  return (
    <svg viewBox="0 0 24 24" className="size-6">
      <defs>
        <linearGradient id="edgeTop" x1="0" y1="0" x2="1" y2="0.6">
          <stop offset="0" stopColor="#1f9be0" />
          <stop offset="0.5" stopColor="#35c1d6" />
          <stop offset="1" stopColor="#62db5d" />
        </linearGradient>
      </defs>
      <path d="M0 12C0 5 5.500 0 12 0c7 0 12 4.700 12 10 0 3.500-2.700 5.500-6 5.500-3 0-4.500-1.300-4.500-2.300 0-.7 1-1.200 1-2.900C14.500 8 12 6 8.500 6 4 6 1 9 0 12z" fill="url(#edgeTop)" />
      <path d="M0 12c.5-4 4-6.500 8.200-6.500 4 0 6.300 2.300 6.300 4.800 0 .7-.2 1.200-.5 1.700-1-2-5-2-6 1.500-.9 4 2.500 8 7.500 10.200A12 12 0 0 1 0 12z" fill="#1474cc" />
      <path d="M8 12.500C7 17 11 20.500 16 20.500c2.500 0 4.500-.6 6-1.400.5-.3.900.2.600.6A12 12 0 0 1 12 24c-4.500-1.500-6.500-8-4-11.500z" fill="#104f9b" />
    </svg>
  );
}

function TrayIcons() {
  return (
    <div className="flex items-center text-white">
      <div className="flex w-6 justify-center">
        <svg viewBox="0 0 13 8" className="h-2 w-[13px]" fill="none" stroke="currentColor" strokeWidth="1.3">
          <path d="M1 7l5.500-5.500L12 7" />
        </svg>
      </div>
      <div className="flex w-6 justify-center">
        <svg viewBox="0 0 12 12" className="size-3" fill="none" stroke="#bdbdbd" strokeWidth="0.9">
          <path d="M1.500 1v10M1.500 1.500h2a1 1 0 0 1 0 4h-2M1.500 5.500h2.200a1 1 0 0 1 0 5H1.500M8 1v4M8 3.500h2v2H8zM6.500 8l2-2 2 2-2 3zM8.500 8.500h2.500v2.500H8" />
        </svg>
      </div>
      <div className="flex w-6 justify-center">
        <svg viewBox="0 0 14 16" className="h-4 w-3.5" fill="none" stroke="currentColor" strokeWidth="1.1">
          <rect x="2" y="4.5" width="7.5" height="7" rx="1.5" />
          <path d="M9.500 7l3-2v6l-3-2M3.500 1.600Q7 0 10.500 1.600M3.500 14.400Q7 16 10.500 14.400" />
        </svg>
      </div>
      <div className="flex w-6 justify-center">
        <svg viewBox="0 0 16 12" className="h-3 w-4">
          <path d="M1 9a3.500 3.500 0 0 1 2-5.500A5 5 0 0 1 12 3l1 4z" fill="#a6a6a6" />
          <path d="M3 11c-3-1-2.500-5 1-5C6 3 10 3.500 11 6c5-1 6 4.500 2.500 5z" fill="#f4f4f4" />
        </svg>
      </div>
      <div className="flex w-6 justify-center">
        <svg viewBox="0 0 18 17" className="h-[17px] w-[18px]" fill="none" stroke="currentColor" strokeWidth="1.1">
          <path d="M1.500 2.500L16 1v10M1.500 2.500V13l8 1.300M6.500 8.300c0-2.500 2.800-3.400 4.400-2M11.300 4v2.600H8.800M11.800 7.500c0 2.500-2.800 3.400-4.400 2M7 12V9.300h2.500" />
          <circle cx="13.500" cy="12.800" r="3.500" fill="#f7940c" stroke="none" />
        </svg>
      </div>
      <div className="flex w-6 justify-center">
        <svg viewBox="0 0 17 12" className="h-3 w-[17px]" fill="none" stroke="currentColor" strokeWidth="1.2">
          <path d="M6 3.500h9v7H4.500V7.500M15.500 5.500v3" />
          <rect x="7" y="5" width="5.5" height="4" fill="currentColor" stroke="none" />
          <path d="M1.800 0v2M4.200 0v2M.8 2.300h4.400v1.500L3 6 .8 3.800zM3 6v5" />
        </svg>
      </div>
      <div className="flex w-6 justify-center">
        <svg viewBox="0 0 17 14" className="h-3.5 w-[17px]" fill="none" stroke="currentColor" strokeWidth="1.1">
          <path d="M1 5h2.500L7 1.500v11L3.500 9H1zM9 5q1.500 2 0 4M11 3.300q3 3.700 0 7.400" />
          <path d="M13.300 1.600q4 5.400 0 10.800" stroke="#8d8d8d" />
        </svg>
      </div>
      <div className="flex w-6 justify-center">
        <svg viewBox="0 0 14 14" className="size-3.5" fill="none" stroke="currentColor" strokeWidth="1.1">
          <path d="M1 12.500A11.500 11.500 0 0 1 12.500 2M3.500 12.800a9 9 0 0 1 9-7.800M6.300 13a6.300 6.300 0 0 1 6.200-5.200M9 13a3.500 3.500 0 0 1 3.500-3" />
          <circle cx="12" cy="12.5" r="1.2" fill="currentColor" stroke="none" />
        </svg>
      </div>
    </div>
  );
}

function Taskbar() {
  return (
    <div className="flex h-10 shrink-0 bg-[#22211f] text-white">
      <div className="flex w-12 items-center justify-center">
        <svg viewBox="0 0 16 16" className="size-4" fill="#fff">
          <path d="M0 2.300l6.800-1v6.300H0zM7.600 1.200L16 0v7.600H7.600zM0 8.400h6.800v6.300l-6.800-1zM7.600 8.400H16V16l-8.400-1.200z" />
        </svg>
      </div>
      <div className="flex w-72 items-center border border-[#c8c8c8] bg-[#f2f2f2]">
        <Search className="ml-[11px] size-[18px] -scale-x-100 text-[#1a1a1a]" strokeWidth={1.6} />
        <span className="ml-2.5 flex-1 text-[15px] tracking-[-0.52px] text-[#333]">Type here to search</span>
        <div className="mr-[9px]">
          <SearchArt />
        </div>
      </div>
      <div className="flex w-12 items-center justify-center">
        <svg viewBox="0 0 16 16" className="size-4" fill="none" stroke="#fff" strokeWidth="1.2">
          <path d="M.6 0v2.600h10.800V0M.6 16v-2.600h10.800V16M14.500 0v4M14.500 9v7" />
          <rect x="0.6" y="5" width="10.8" height="6" />
          <rect x="13.5" y="5" width="2" height="2.5" fill="#fff" stroke="none" />
        </svg>
      </div>
      <div className="ml-[3px] flex w-12 items-center justify-center">
        <CopilotIcon />
      </div>
      <div className="ml-[5px] flex w-10 items-center justify-center border-b-2 border-[#76b9ed]">
        <ExplorerIcon />
      </div>
      <div className="ml-1 flex w-12 items-center justify-center">
        <StoreIcon />
      </div>
      <div className="ml-0.5 flex w-12 items-center justify-center">
        <OutlookIcon />
      </div>
      <div className="flex w-12 items-center justify-center">
        <VscVscode className="ml-0.5 size-[27px] text-[#2592dc]" />
      </div>
      <div className="ml-[2px] flex w-12 items-center justify-center border-b-2 border-[#76b9ed] bg-[#4e4d4c]">
        <ChromeIcon />
      </div>
      <div className="ml-[1px] flex w-12 items-center justify-center">
        <EdgeIcon />
      </div>
      <div className="ml-auto flex">
        <TrayIcons />
        <div className="flex w-[34px] flex-col justify-center text-center text-[12px] leading-[17px] tracking-[-0.3px]">
          <span>ENG</span>
          <span>IN</span>
        </div>
        <div className="ml-1 flex w-[60px] flex-col justify-center text-center text-[12px] leading-[17px] tracking-[-0.45px]">
          <span className="tracking-[-0.2px]">9:02 AM</span>
          <span>10/1/2025</span>
        </div>
        <div className="ml-[15px] flex w-4 items-center">
          <svg viewBox="0 0 17 17" className="size-[17px]">
            <path d="M0 0h16v13H6l-3 3v-3H0z" fill="#fff" />
            <path d="M3 3.500h10M3 6.500h10M3 9.500h6" stroke="#22211f" strokeWidth="1.2" />
            <path d="M13 7a4.500 4.500 0 1 0 3.500 6A4 4 0 0 1 13 7z" fill="#fff" stroke="#22211f" strokeWidth="0.9" />
          </svg>
        </div>
        <div className="mr-1 ml-[19px] w-px bg-[#6b6a69]" />
      </div>
    </div>
  );
}

export default function App() {
  return (
    <div className="flex h-[768px] w-[1366px] flex-col overflow-hidden bg-[#fcfcfc] font-['Open_Sans','Noto_Sans',sans-serif]">
      <TabStrip />
      <AddressBar />
      <BookmarkBar />
      <main className="flex min-h-0 flex-1 flex-col font-['Roboto','Liberation_Sans',sans-serif]">
        <WorkspaceHeader />
        <div className="flex min-h-0 flex-1">
          <Sidebar />
          <PreviewPane />
        </div>
      </main>
      <Taskbar />
    </div>
  );
}
